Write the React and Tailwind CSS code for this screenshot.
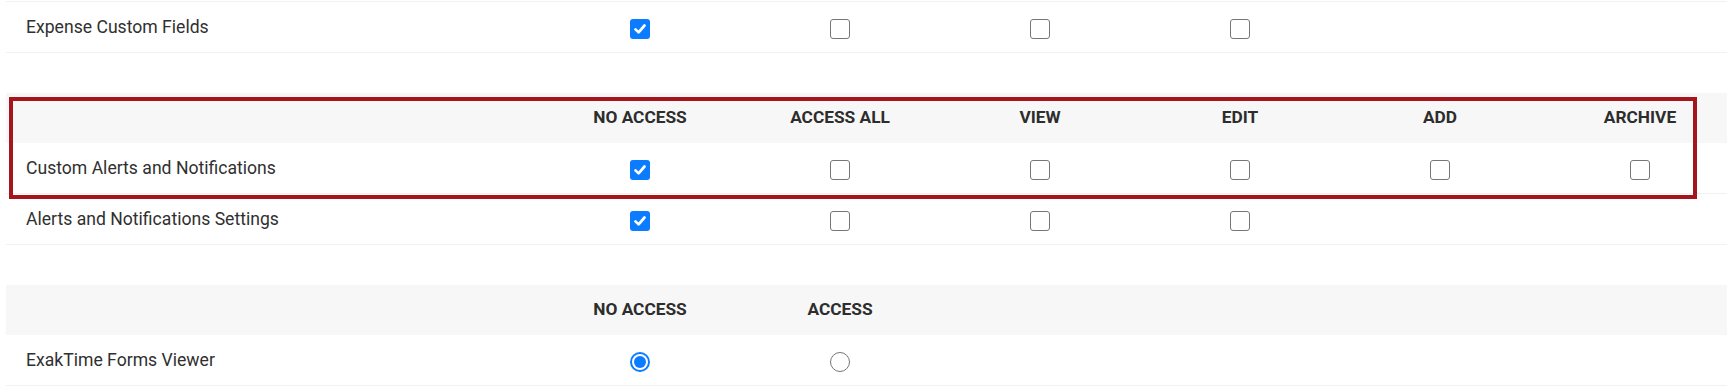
import React from "react";

function Checkbox({ checked }) {
  if (checked) {
    return (
      <span className="flex h-[20px] w-[20px] items-center justify-center rounded-[3px] bg-[#0b7bff]">
        <svg width="14" height="14" viewBox="0 0 14 14" fill="none">
          <path d="M2.5 7.4 L5.6 10.4 L11.5 3.5" stroke="#ffffff" strokeWidth="2.7" strokeLinecap="round" strokeLinejoin="round" />
        </svg>
      </span>
    );
  }
  return <span className="block h-[20px] w-[20px] rounded-[3px] border border-[#767676] bg-white" />;
}

function Radio({ checked }) {
  if (checked) {
    return (
      <span className="flex h-[20px] w-[20px] items-center justify-center rounded-full border-2 border-[#0b7bff] bg-white">
        <span className="block h-[12px] w-[12px] rounded-full bg-[#0b7bff]" />
      </span>
    );
  }
  return <span className="block h-[20px] w-[20px] rounded-full border border-[#767676] bg-white" />;
}

function Cell({ children }) {
  return <div className="flex w-[200px] shrink-0 items-center justify-center pt-[4px]">{children}</div>;
}

function HeaderRow({ labels }) {
  return (
    <div className="flex h-[50px] bg-[#f7f7f7]">
      <div className="w-[534px] shrink-0" />
      {labels.map((l) => (
        <div key={l} className="flex w-[200px] shrink-0 items-center justify-center text-[17.3px] font-bold uppercase text-[#2d2d2d]">
          {l}
        </div>
      ))}
    </div>
  );
}

function Row({ label, cells, className = "" }) {
  return (
    <div className={"flex border-b border-[#f1f1f1] " + className}>
      <div className="flex w-[534px] shrink-0 items-center pl-[20px] text-[17.6px] text-[#303030]">{label}</div>
      {cells.map((c, i) => (
        <Cell key={i}>{c}</Cell>
      ))}
    </div>
  );
}

export default function App() {
  return (
    <div className="relative h-[392px] w-full overflow-hidden bg-white" style={{ fontFamily: "Roboto, 'Liberation Sans', sans-serif" }}>
      <div className="ml-[6px] w-[1740px] pt-px">
        <Row
          label="Expense Custom Fields"
          className="h-[52px] border-t"
          cells={[<Checkbox checked />, <Checkbox />, <Checkbox />, <Checkbox />]}
        />

        <div className="mt-[40px]">
          <HeaderRow labels={["No Access", "Access All", "View", "Edit", "Add", "Archive"]} />
          <Row
            label="Custom Alerts and Notifications"
            className="h-[51px]"
            cells={[<Checkbox checked />, <Checkbox />, <Checkbox />, <Checkbox />, <Checkbox />, <Checkbox />]}
          />
          <Row
            label="Alerts and Notifications Settings"
            className="h-[51px]"
            cells={[<Checkbox checked />, <Checkbox />, <Checkbox />, <Checkbox />]}
          />
        </div>

        <div className="mt-[40px]">
          <HeaderRow labels={["No Access", "Access"]} />
          <Row label="ExakTime Forms Viewer" className="h-[51px]" cells={[<Radio checked />, <Radio />]} />
        </div>
      </div>

      <div className="pointer-events-none absolute left-[9px] top-[97px] h-[102px] w-[1688px] border-[4px] border-[#a5151e]" />
    </div>
  );
}
